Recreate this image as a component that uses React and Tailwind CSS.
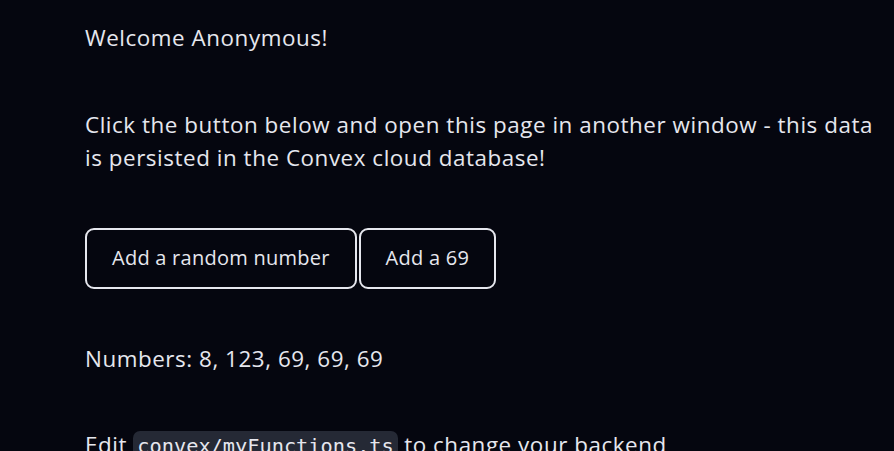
export default function App() {
  return (
    <div className="min-h-[451px] w-full overflow-hidden bg-[#05060f] text-[#e6e7ee] font-['Open_Sans',sans-serif] text-[22.4px] leading-[33.6px] tracking-[0.55px]">
      <div className="flex h-[451px] flex-col gap-[53px] overflow-hidden pl-[85px] pt-[21px]">
        <p>Welcome Anonymous!</p>
        <p className="w-[800px]">
          Click the button below and open this page in another window - this data is persisted in the Convex cloud database!
        </p>
        <div className="flex gap-[2px]">
          <button className="rounded-[9px] border-2 border-[#e6e7ee] bg-[#05060f] px-[25px] py-[13.5px] text-[20px] leading-[30px] tracking-[0.25px] text-[#e6e7ee]">
            Add a random number
          </button>
          <button className="rounded-[9px] border-2 border-[#e6e7ee] bg-[#05060f] px-[25px] py-[13.5px] text-[20px] leading-[30px] tracking-[0.25px] text-[#e6e7ee]">
            Add a 69
          </button>
        </div>
        <p>Numbers: 8, 123, 69, 69, 69</p>
        <p className="whitespace-nowrap">
          Edit{" "}
          <code className="rounded-[7px] bg-[#252935] px-[4px] py-[3px] font-['DejaVu_Sans_Mono',monospace] text-[20.3px] tracking-normal">
            convex/myFunctions.ts
          </code>{" "}
          to change your backend
        </p>
      </div>
    </div>
  );
}
